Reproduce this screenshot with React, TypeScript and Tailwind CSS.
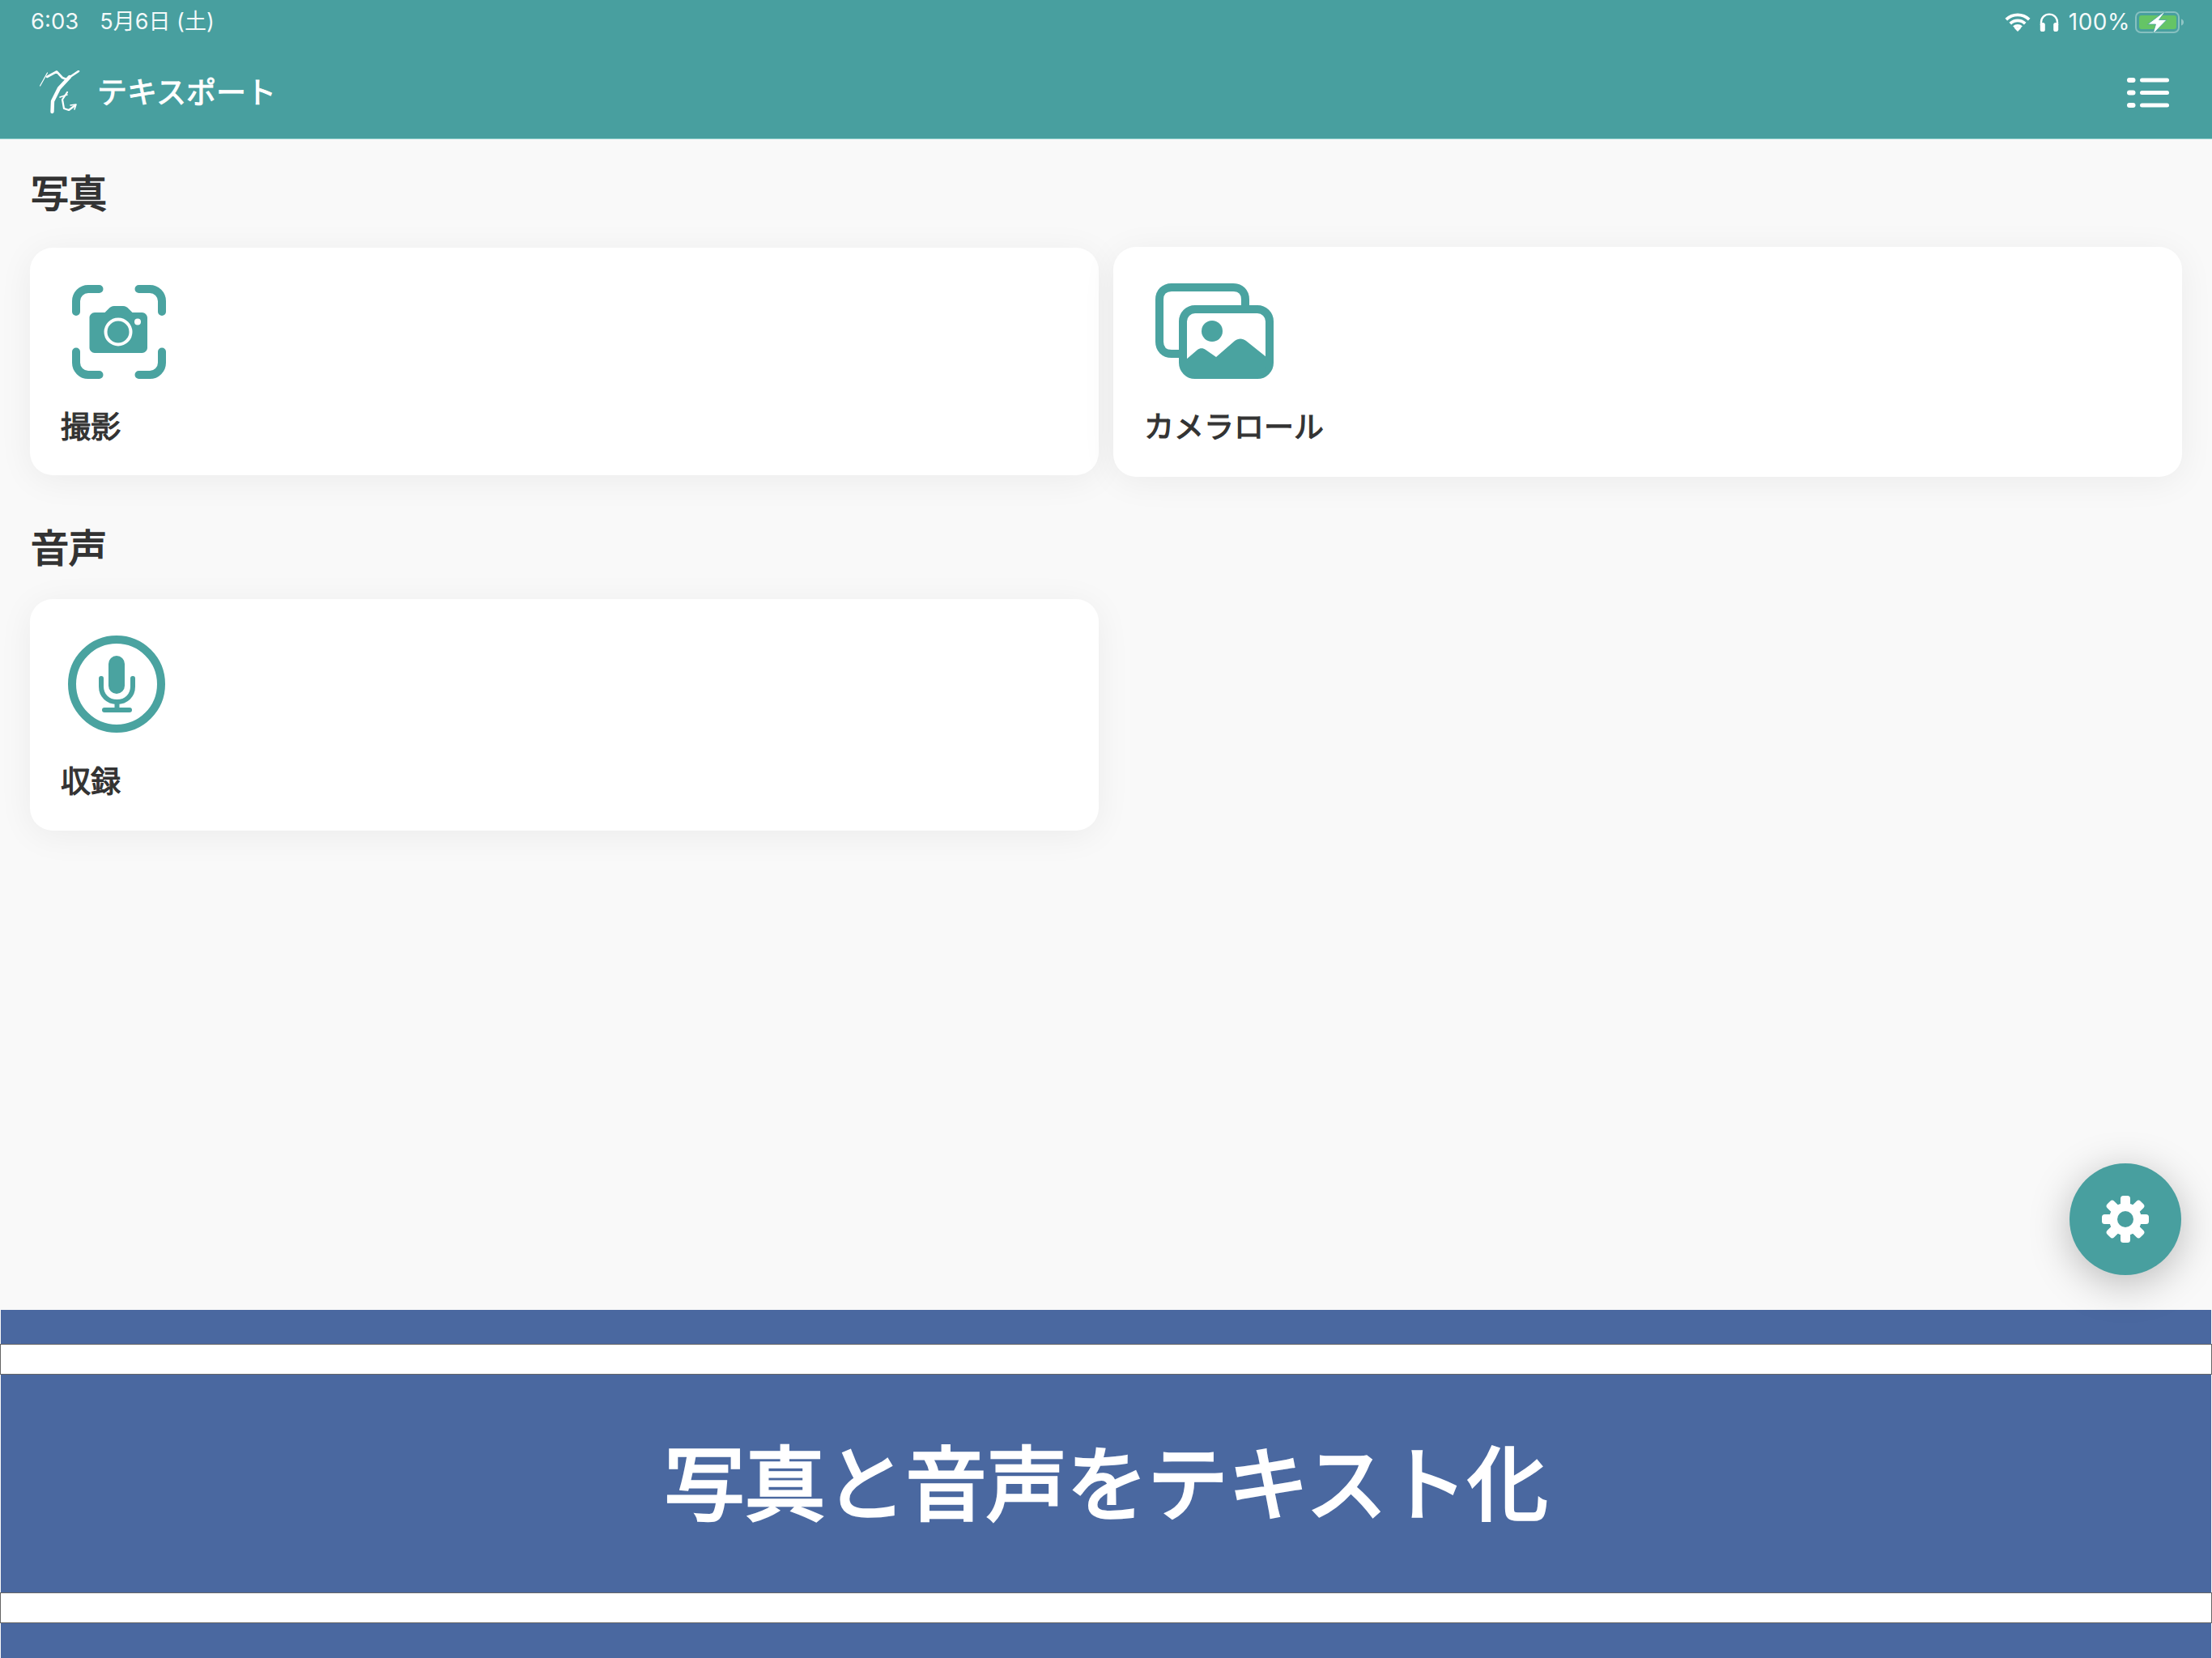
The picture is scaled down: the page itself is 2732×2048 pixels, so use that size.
const jp = { fontFamily: '"Noto Sans CJK JP", sans-serif' };
const ui = { fontFamily: 'Inter, "Noto Sans CJK JP", sans-serif' };

const WifiIcon = () => (
  <svg width="32" height="23" viewBox="0 0 32 23" fill="none" stroke="#fff" strokeWidth="3.8">
    <path d="M1.8 8.2C9.8 0.4 22.2 0.4 30.2 8.2" />
    <path d="M6.8 13.2C12 8.2 20 8.2 25.2 13.2" />
    <path d="M11.4 17.6C14 15.2 18 15.2 20.6 17.6" />
    <path d="M16 23l-4.2-4.2c2.4-1.8 6-1.8 8.4 0z" fill="#fff" stroke="none" />
  </svg>
);

const HeadphonesIcon = () => (
  <svg width="24" height="23" viewBox="0 0 24 23" fill="none">
    <path d="M2 15V11.5C2 5.5 6.500 1.600 12 1.600S22 5.500 22 11.500V15" stroke="#fff" strokeWidth="2.4" />
    <rect x="0.8" y="12" width="6" height="11" rx="2.6" fill="#fff" />
    <rect x="17.2" y="12" width="6" height="11" rx="2.6" fill="#fff" />
  </svg>
);

const BatteryIcon = () => (
  <svg width="60" height="29" viewBox="0 0 60 29" fill="none">
    <rect x="1" y="2" width="53" height="25" rx="6" stroke="#fff" strokeOpacity="0.35" strokeWidth="2" />
    <rect x="5" y="6" width="46" height="17" rx="3" fill="#65C466" />
    <path d="M57 10.500c1.800.6 3 2 3 4s-1.200 3.400-3 4z" fill="#fff" fillOpacity="0.4" />
    <path d="M38 0 15.500 17h10l-3.500 12 17-17.500h-9.500z" fill="#fff" stroke="#489F9F" strokeWidth="0.8" />
  </svg>
);

const ListIcon = () => (
  <svg width="52" height="37" viewBox="0 0 52 37" fill="#fff">
    <rect x="0" y="0" width="10.5" height="6" rx="3" />
    <rect x="16" y="0.5" width="36" height="5" rx="2.5" />
    <rect x="0" y="15.5" width="10.5" height="6" rx="3" />
    <rect x="16" y="16" width="36" height="5" rx="2.5" />
    <rect x="0" y="31" width="10.5" height="6" rx="3" />
    <rect x="16" y="31.5" width="36" height="5" rx="2.5" />
  </svg>
);

const LogoMark = () => (
  <svg width="50" height="54" viewBox="0 0 50 54" fill="none" stroke="#fff" strokeLinecap="round" strokeLinejoin="round">
    <path d="M0.5 19 9.500 3" strokeWidth="1.2" />
    <path d="M9 8 21 1.500 28 9 33 11 48 1" strokeWidth="2.6" />
    <path d="M37 8 24 22 16 38 15.500 51" strokeWidth="4.4" />
    <path d="M34 27 28 36 30 47 36 49 44 43" strokeWidth="2.2" />
    <path d="M25 33 34 30M38 43 45 42 43 48" strokeWidth="1.6" />
  </svg>
);

const CameraScanIcon = () => (
  <svg width="116" height="116" viewBox="0 0 116 116" fill="none">
    <g stroke="#4AA3A0" strokeWidth="10" strokeLinecap="round">
      <path d="M5 33V20A15 15 0 0 1 20 5H33.500" />
      <path d="M82.500 5H96A15 15 0 0 1 111 20V33" />
      <path d="M5 82.500V96A15 15 0 0 0 20 111H33.500" />
      <path d="M82.500 111H96A15 15 0 0 0 111 96V82.500" />
    </g>
    <path d="M28 34h12.500l4.500-4.500c2-2 4-3.500 7-3.500h11c3 0 5 1.500 7 3.500l4.500 4.500h12c3.500 0 6.500 3 6.500 6.500v37c0 3.500-3 6.500-6.500 6.500H28c-3.500 0-6.500-3-6.500-6.500v-37c0-3.500 3-6.500 6.500-6.500z" fill="#4AA3A0" />
    <circle cx="57" cy="58" r="15.500" stroke="#fff" strokeWidth="4" />
    <circle cx="81" cy="45.500" r="4" fill="#fff" />
  </svg>
);

const GalleryIcon = () => (
  <svg width="146" height="118" viewBox="0 0 146 118" fill="none">
    <path d="M29 87H20C11 87 5 81 5 72V20C5 11 11 5 20 5H96C105 5 111 11 111 20V27" stroke="#4AA3A0" strokeWidth="10" />
    <rect x="34" y="32" width="107" height="81" rx="15" stroke="#4AA3A0" strokeWidth="10" />
    <circle cx="70" cy="59" r="13" fill="#4AA3A0" />
    <path d="M38 94 52 82C55 79.500 59 79.500 62 82L75 91 98 71C102 67.500 108 67.500 112 71L137 91V104C137 110 132 114 127 114H48C42 114 38 110 38 104z" fill="#4AA3A0" />
  </svg>
);

const MicIcon = () => (
  <svg width="120" height="120" viewBox="0 0 120 120" fill="none">
    <circle cx="60" cy="60" r="55" stroke="#4AA3A0" strokeWidth="10" />
    <rect x="50" y="25" width="20" height="47" rx="10" fill="#4AA3A0" />
    <g stroke="#4AA3A0" strokeWidth="6" strokeLinecap="round">
      <path d="M41 53V63C41 74 49 82 60.500 82S80 74 80 63V53" />
      <path d="M60.500 82V92" />
      <path d="M45 92H76" />
    </g>
  </svg>
);

const GearIcon = () => (
  <svg width="58" height="58" viewBox="0 0 58 58" fill="#fff">
    {[0, 45, 90, 135, 180, 225, 270, 315].map((deg) => (
      <rect key={deg} x="23" y="0" width="12" height="16" rx="3.500" transform={`rotate(${deg} 29 29)`} />
    ))}
    <circle cx="29" cy="29" r="20" />
    <circle cx="29" cy="29" r="10" fill="#489F9F" />
  </svg>
);

function StatusBar() {
  return (
    <div className="flex h-[54px] items-center justify-between pl-[38px] pr-[35px] text-[28px] text-white/95" style={ui}>
      <div className="flex items-center gap-[26px]">
        <span className="text-[27.5px]">6:03</span>
        <span className="text-[27px]">5月6日 (土)</span>
      </div>
      <div className="flex items-center">
        <WifiIcon />
        <span className="ml-[11px]"><HeadphonesIcon /></span>
        <span className="ml-[12px] tracking-[0.5px]">100%</span>
        <span className="ml-[6px]"><BatteryIcon /></span>
      </div>
    </div>
  );
}

function Header() {
  return (
    <header className="h-[172px] shrink-0 border-b border-[#8fcfcc] bg-[#489F9F]">
      <StatusBar />
      <div className="flex h-[117px] items-center justify-between pl-[49px] pr-[53px] pt-[3px]">
        <div className="flex items-center">
          <LogoMark />
          <span className="mb-[3px] ml-[21px] text-[37px] text-white [-webkit-text-stroke:1px_white]" style={jp}>テキスポート</span>
        </div>
        <ListIcon />
      </div>
    </header>
  );
}

function ActionCard({ icon, label, className }: { icon: React.ReactNode; label: string; className: string }) {
  return (
    <div className={`rounded-[28px] bg-white shadow-[0_6px_44px_rgba(0,0,0,0.06)] ${className}`}>
      {icon}
      <div className="pl-[38px] text-[37px] leading-[50px] text-[#333] [-webkit-text-stroke:1.2px_#333]" style={jp}>{label}</div>
    </div>
  );
}

function SectionTitle({ children }: { children: React.ReactNode }) {
  return <h2 className="pl-px text-[47px] font-normal leading-[62px] text-[#333] [-webkit-text-stroke:1.7px_#333]" style={jp}>{children}</h2>;
}

function Banner() {
  return (
    <div className="flex h-[430px] shrink-0 flex-col">
      <div className="mx-px h-[42px] bg-[#4A68A0]" />
      <div className="h-[38px] border border-[#666] bg-white" />
      <div className="mx-px flex h-[269px] items-center justify-center bg-[#4A68A0] pb-[9px] text-[99.5px] text-white [-webkit-text-stroke:3.5px_white]" style={jp}>
        写真と音声をテキスト化
      </div>
      <div className="h-[38px] border border-[#666] bg-white" />
      <div className="mx-px flex-1 bg-[#4A68A0]" />
    </div>
  );
}

export default function App() {
  return (
    <div className="relative flex h-[2048px] w-[2732px] flex-col overflow-hidden bg-[#F9F9F9]">
      <Header />
      <main className="flex-1 px-[37px] pt-[33px]">
        <SectionTitle>写真</SectionTitle>
        <div className="mt-[39px] grid grid-cols-2 items-start gap-x-[18px]">
          <ActionCard
            className="h-[281px] pt-[46px]"
            label="撮影"
            icon={<div className="mb-[32px] pl-[52px]"><CameraScanIcon /></div>}
          />
          <ActionCard
            className="-mt-px h-[284px] pt-[45px]"
            label="カメラロール"
            icon={<div className="mb-[32px] pl-[52px]"><GalleryIcon /></div>}
          />
        </div>
        <div className="mt-[54px]">
          <SectionTitle>音声</SectionTitle>
        </div>
        <div className="mt-[35px] grid grid-cols-2 gap-x-[18px]">
          <ActionCard
            className="h-[286px] pt-[45px]"
            label="収録"
            icon={<div className="mb-[33px] pl-[47px]"><MicIcon /></div>}
          />
        </div>
      </main>
      <Banner />
      <button className="absolute left-[2556px] top-[1437px] flex h-[138px] w-[138px] items-center justify-center rounded-full bg-[#489F9F] shadow-[0_10px_50px_rgba(0,0,0,0.26)]">
        <GearIcon />
      </button>
    </div>
  );
}
